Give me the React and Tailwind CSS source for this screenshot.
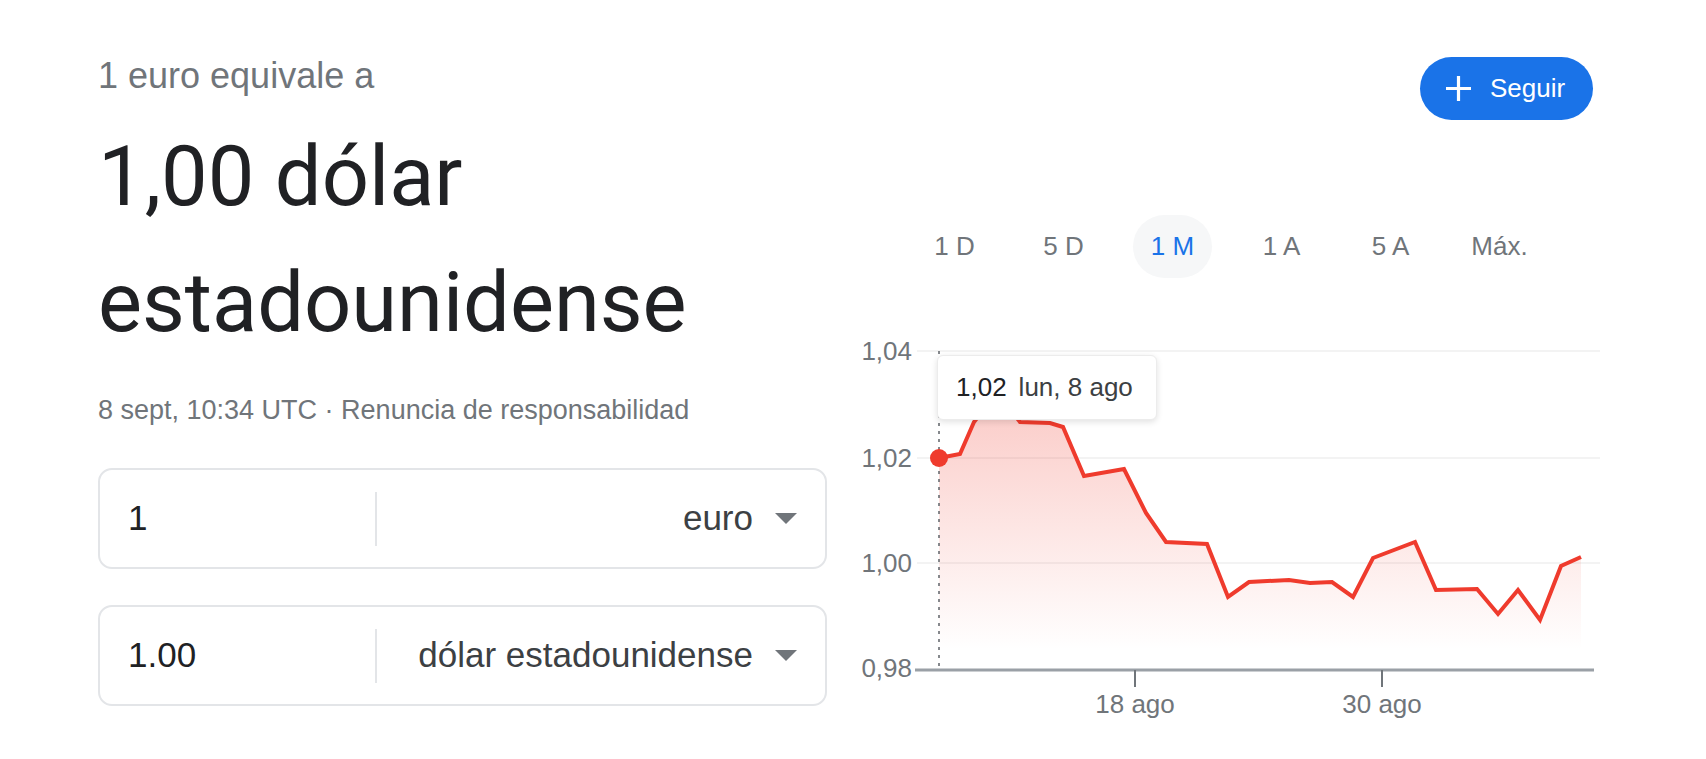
import React from 'react';

const RED = '#ef3b2d';

const points = [
  [79, 138], [100, 134], [114, 102], [128, 84], [148, 86], [160, 102], [190, 103],
  [203, 107], [224, 156], [264, 149], [286, 193], [306, 222], [347, 224], [368, 277],
  [389, 262], [429, 260], [450, 263], [472, 262], [493, 277], [513, 238], [555, 222],
  [576, 270], [617, 269], [638, 294], [658, 270], [680, 300], [701, 246], [721, 237],
];

const linePath = points.map(([x, y], i) => `${i ? 'L' : 'M'}${x} ${y}`).join(' ');
const areaPath = `${linePath} L721 350 L79 350 Z`;

const tabs = ['1 D', '5 D', '1 M', '1 A', '5 A', 'Máx.'];

const yLabels = [
  { label: '1,04', y: 31 },
  { label: '1,02', y: 138 },
  { label: '1,00', y: 243 },
];

const CurrencyBox = ({ value, unit }) => (
  <div className="flex items-center h-[101px] border-2 border-[#e3e5e8] rounded-[14px]">
    <div className="w-[275px] pl-[28px] text-[35px] text-[#202124]">{value}</div>
    <div className="w-[2px] h-[54px] bg-[#e3e5e8]"></div>
    <div className="flex-1 flex items-center justify-end pr-[28px] text-[35px] text-[#3c4043]">
      <span>{unit}</span>
      <svg width="22" height="11" viewBox="0 0 22 11" className="ml-[22px]">
        <path d="M0 0 L22 0 L11 11 Z" fill="#70757a" />
      </svg>
    </div>
  </div>
);

const Chart = () => (
  <div className="relative mt-[42px] h-[400px] w-[740px]">
    <svg width="740" height="400" className="block" style={{ fontFamily: '"Liberation Sans", Arial, sans-serif' }}>
      <defs>
        <linearGradient id="fill" x1="0" y1="84" x2="0" y2="330" gradientUnits="userSpaceOnUse">
          <stop offset="0" stopColor={RED} stopOpacity="0.26" />
          <stop offset="1" stopColor={RED} stopOpacity="0" />
        </linearGradient>
      </defs>

      {yLabels.map((l) => (
        <g key={l.label}>
          <line x1="57" x2="740" y1={l.y} y2={l.y} stroke="#f3f3f3" strokeWidth="2" />
          <text x="52" y={l.y + 9} textAnchor="end" fontSize="26" fill="#70757a">{l.label}</text>
        </g>
      ))}
      <text x="52" y="357" textAnchor="end" fontSize="26" fill="#70757a">0,98</text>

      <path d={areaPath} fill="url(#fill)" />
      <line x1="79" x2="79" y1="31" y2="350" stroke="#5f6368" strokeWidth="1.5" strokeDasharray="3 5" />

      <line x1="55" x2="734" y1="350" y2="350" stroke="#9aa0a6" strokeWidth="3" />
      <line x1="275" x2="275" y1="350" y2="367" stroke="#70757a" strokeWidth="2" />
      <line x1="522" x2="522" y1="350" y2="367" stroke="#70757a" strokeWidth="2" />
      <text x="275" y="393" textAnchor="middle" fontSize="26" fill="#70757a">18 ago</text>
      <text x="522" y="393" textAnchor="middle" fontSize="26" fill="#70757a">30 ago</text>

      <path d={linePath} fill="none" stroke={RED} strokeWidth="4" strokeLinejoin="miter" />
      <circle cx="79" cy="138" r="9" fill={RED} />
    </svg>

    <div className="absolute left-[77px] top-[35px] w-[220px] h-[65px] flex items-center pl-[18px] gap-[12px] bg-white border border-[#ececec] rounded-md shadow-[0_2px_6px_rgba(0,0,0,0.12)] text-[26px]">
      <span className="text-[#202124]">1,02</span>
      <span className="text-[#3c4043]">lun, 8 ago</span>
    </div>
  </div>
);

export default function App() {
  return (
    <div className="w-[1706px] h-[759px] bg-white flex pl-[98px] font-['Liberation_Sans',Arial,sans-serif] overflow-hidden">
      <div className="w-[729px] flex flex-col">
        <div className="mt-[52px] text-[36px] leading-[48px] text-[#70757a]">1 euro equivale a</div>
        <div className="mt-[14px] font-['Roboto',sans-serif] text-[83px] leading-[126px] text-[#202124]">
          1,00 dólar estadounidense
        </div>
        <div className="mt-[26px] text-[27px] leading-[36px] text-[#70757a]">
          8 sept, 10:34 UTC · <span>Renuncia de responsabilidad</span>
        </div>
        <div className="mt-[40px] flex flex-col gap-[36px]">
          <CurrencyBox value="1" unit="euro" />
          <CurrencyBox value="1.00" unit="dólar estadounidense" />
        </div>
      </div>

      <div className="ml-[33px] w-[740px] flex flex-col">
        <div className="flex justify-end pt-[57px] pr-[7px]">
          <button className="flex items-center h-[63px] w-[173px] rounded-full bg-[#1a73e8] text-white pl-[25px] gap-[18px]">
            <svg width="27" height="27" viewBox="0 0 27 27">
              <path d="M13.5 1 V26 M1 13.5 H26" stroke="white" strokeWidth="3.2" />
            </svg>
            <span className="text-[26px]">Seguir</span>
          </button>
        </div>

        <div className="flex mt-[95px] pl-[40px] h-[63px]">
          {tabs.map((t) => (
            <div key={t} className="w-[109px] flex items-center justify-center">
              {t === '1 M' ? (
                <div className="w-[79px] h-[63px] rounded-full bg-[#f6f7f8] flex items-center justify-center text-[26px] text-[#1a73e8]">
                  {t}
                </div>
              ) : (
                <span className="text-[26px] text-[#70757a]">{t}</span>
              )}
            </div>
          ))}
        </div>

        <Chart />
      </div>
    </div>
  );
}
